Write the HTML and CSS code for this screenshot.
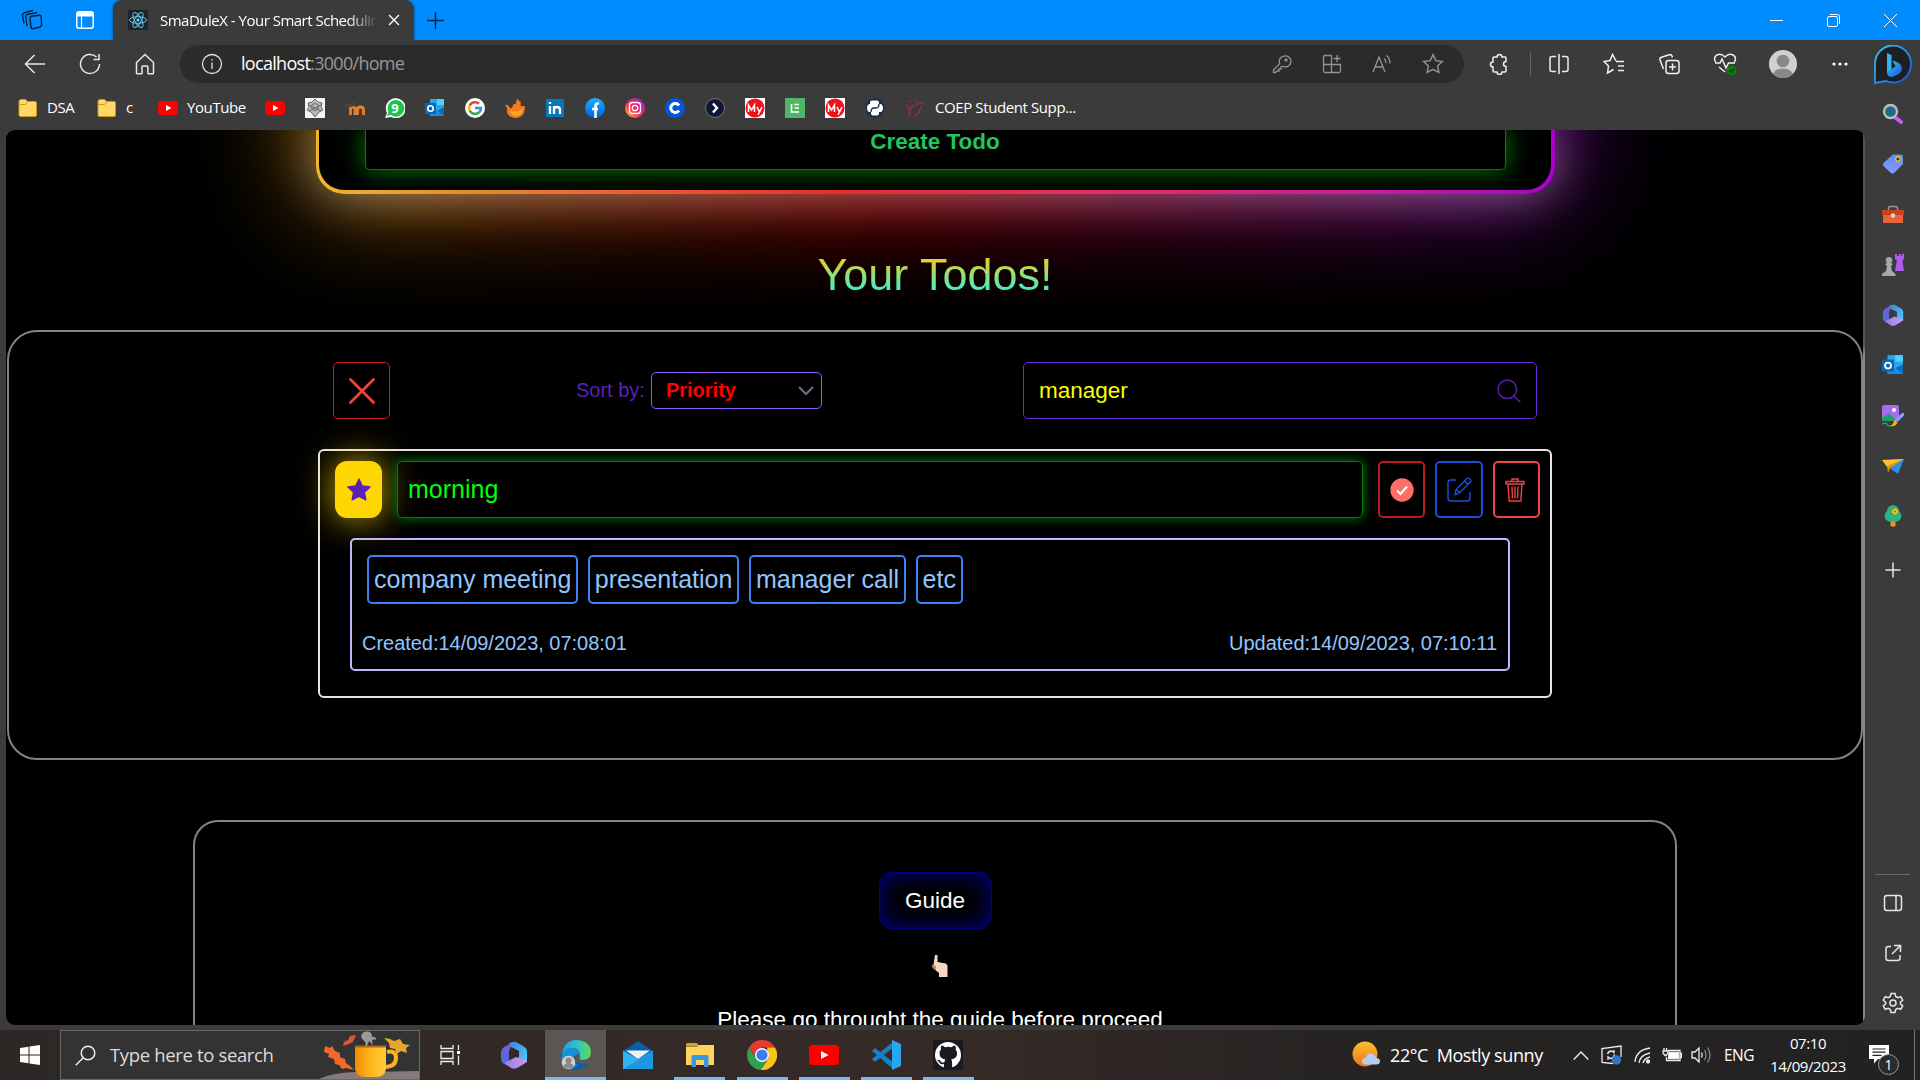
FILE: index.html
```html
<!DOCTYPE html>
<html lang="en">
<head>
<meta charset="utf-8">
<title>SmaDuleX - Your Smart Scheduling</title>
<link rel="stylesheet" href="styles.css">
</head>
<body>
<svg class="defs" width="0" height="0">
  <defs>
    <linearGradient id="gBlue" x1="0" y1="0" x2="1" y2="1"><stop offset="0" stop-color="#35c8f5"/><stop offset="1" stop-color="#1b54d8"/></linearGradient>
    <linearGradient id="gInsta" x1="0" y1="1" x2="1" y2="0"><stop offset="0" stop-color="#ffc928"/><stop offset=".45" stop-color="#f9265c"/><stop offset="1" stop-color="#8a21e8"/></linearGradient>
    <linearGradient id="gFb" x1="0" y1="0" x2="0" y2="1"><stop offset="0" stop-color="#19afff"/><stop offset="1" stop-color="#0062e0"/></linearGradient>
    <linearGradient id="gM1" x1="0" y1="0" x2="0" y2="1"><stop offset="0" stop-color="#7a5cd0"/><stop offset="1" stop-color="#4a6ee0"/></linearGradient>
    <linearGradient id="gM2" x1="0" y1="0" x2="1" y2="1"><stop offset="0" stop-color="#3f7fe0"/><stop offset="1" stop-color="#48d0ff"/></linearGradient>
    <linearGradient id="gM3" x1="0" y1="0" x2="1" y2="0"><stop offset="0" stop-color="#9a7be8"/><stop offset="1" stop-color="#c79af5"/></linearGradient>
    <linearGradient id="gSun" x1="0" y1="0" x2="0" y2="1"><stop offset="0" stop-color="#f6c12e"/><stop offset="1" stop-color="#f4731c"/></linearGradient>
    <linearGradient id="gMug" x1="0" y1="0" x2="1" y2="0"><stop offset="0" stop-color="#f08a00"/><stop offset=".5" stop-color="#ffb81c"/><stop offset="1" stop-color="#ffc93c"/></linearGradient>
    <linearGradient id="gEdge" x1="0" y1="0" x2="1" y2="0"><stop offset="0" stop-color="#1aa0e0"/><stop offset=".5" stop-color="#2cc0d0"/><stop offset="1" stop-color="#5fe04a"/></linearGradient>
    <linearGradient id="gTag" x1="0" y1="0" x2="0" y2="1"><stop offset="0" stop-color="#5a8cf8"/><stop offset="1" stop-color="#8a9aff"/></linearGradient>
    <symbol id="folder" viewBox="0 0 20 20"><path d="M1 3.500Q1 1.500 3 1.500h4.500l2 2H17q1.500 0 1.500 1.500v12q0 1.500-1.500 1.500H2.500Q1 18.500 1 17z" fill="#ffd868" stroke="#c99a1c"/><path d="M1.500 6.500h6l2-2.500" fill="none" stroke="#c99a1c"/></symbol>
    <symbol id="yt" viewBox="0 0 20 20"><rect y="3" width="20" height="14" rx="3.500" fill="#f00"/><path d="M8 7l5.500 3L8 13z" fill="#fff"/></symbol>
    <symbol id="outlook" viewBox="0 0 20 20"><path d="M5 1h14v17H5z" fill="#28a8ea"/><path d="M12 1h7v6h-7z" fill="#50d0ff"/><path d="M5 10l14 8H5z" fill="#1490df"/><path d="M19 9v9l-7-5z" fill="#0f6ab8"/><rect y="5" width="11" height="11" rx="1" fill="#0a66b8"/><circle cx="5.500" cy="10.500" r="2.700" fill="none" stroke="#fff" stroke-width="1.600"/></symbol>
    <symbol id="m365" viewBox="0 0 26 28"><path d="M12 1L3 6Q0 8 0 11v7q0 3 3 5l5 2V10z" fill="url(#gM1)"/><path d="M8 2l6-1.500 9 5q3 2 3 5v11L18 17V10l-8-4z" fill="url(#gM2)"/><path d="M3 22l12-6 11 3q0 2-3 4l-7 4q-3 1.500-6 0z" fill="url(#gM3)"/></symbol>
    <symbol id="my" viewBox="0 0 20 20"><path d="M0 0h20v20H0z" fill="#fff"/><circle cx="10" cy="10" r="9.500" fill="#f0101c"/><path d="M3.500 14V7l3 5 3-5v7M12 9l2.500 5L17 9M14.500 14l-1.500 3" fill="none" stroke="#fff" stroke-width="1.500"/></symbol>
    <symbol id="star" viewBox="0 0 20 20"><path d="M10 1.500l2.600 5.400 5.900.8-4.300 4.100 1.100 5.900L10 14.900l-5.300 2.800 1.100-5.900L1.500 7.700l5.900-.8z"/></symbol>
  </defs>
</svg>

<header class="titlebar">
  <div class="window-tools">
    <svg width="22" height="22" viewBox="0 0 22 22" fill="none" stroke="#04203c" stroke-width="1.400"><path d="M10.500 7.300l7.500-1q2-.2 2.200 1.700l.3 8q0 2-2 2.300l-6.300 1.500q-2 .3-2.200-1.700L9 9.500q0-2 1.500-2.200z"/><path d="M6 17L4.700 7.500q0-2 2-2.300L16 3.800"/><path d="M3 14.500L1.500 6q0-2 2-2.300L12 1.500"/></svg>
    <svg width="18" height="18" viewBox="0 0 18 18"><rect x=".75" y=".75" width="16.500" height="16.500" rx="2.500" fill="none" stroke="#fff" stroke-width="1.500"/><path d="M1 1h16v4.500H1z" fill="#fff"/><path d="M5.500 5v12" stroke="#fff" stroke-width="1.200"/></svg>
  </div>
  <div class="tab">
    <svg width="20" height="20" viewBox="0 0 20 20"><rect width="20" height="20" rx="1" fill="#20232a"/><g fill="none" stroke="#61c9e8" stroke-width="1"><ellipse cx="10" cy="10" rx="8.500" ry="3.300"/><ellipse cx="10" cy="10" rx="8.500" ry="3.300" transform="rotate(60 10 10)"/><ellipse cx="10" cy="10" rx="8.500" ry="3.300" transform="rotate(120 10 10)"/></g><circle cx="10" cy="10" r="1.600" fill="#61dafb"/></svg>
    <span class="tab-title">SmaDuleX - Your Smart Schedulin</span>
    <svg class="tab-close" width="12" height="12" viewBox="0 0 12 12" stroke="#fff" stroke-width="1.400"><path d="M1 1l10 10M11 1L1 11"/></svg>
  </div>
  <svg class="new-tab" width="17" height="17" viewBox="0 0 17 17" stroke="#04203c" stroke-width="1.400"><path d="M8.500 0v17M0 8.500h17"/></svg>
  <div class="window-controls">
    <svg width="13" height="13" viewBox="0 0 13 13" stroke="#fff"><path d="M0 6.500h13"/></svg>
    <svg width="13" height="13" viewBox="0 0 13 13" fill="none" stroke="#fff"><rect x=".5" y="2.500" width="10" height="10" rx="1.500"/><path d="M3 .5h7.500q2 0 2 2V10"/></svg>
    <svg width="13" height="13" viewBox="0 0 13 13" stroke="#fff"><path d="M0 0l13 13M13 0L0 13"/></svg>
  </div>
</header>

<nav class="toolbar">
  <div class="nav-buttons">
    <svg width="22" height="22" viewBox="0 0 22 22"><path d="M21 11H1.500M10.500 2L1.500 11l9 9"/></svg>
    <svg width="22" height="22" viewBox="0 0 22 22"><path d="M20.500 11a9.500 9.500 0 1 1-3-7M20 1v5.500h-5.500"/></svg>
    <svg width="22" height="22" viewBox="0 0 22 22"><path d="M2.500 9.500L11 1.500l8.500 8V20q0 .8-.8.8h-4q-.8 0-.8-.8v-6q0-1-1-1H9q-1 0-1 1v6q0 .8-.8.8h-4q-.7 0-.7-.8z"/></svg>
  </div>
  <div class="address">
    <svg width="22" height="22" viewBox="0 0 22 22" fill="none" stroke="#ddd" stroke-width="1.300"><circle cx="11" cy="11" r="9.500"/><path d="M11 9.500V16M11 6v1.600"/></svg>
    <span class="url"><b>localhost</b>:3000/home</span>
    <div class="address-actions">
      <svg width="20" height="20" viewBox="0 0 20 20"><path d="M12.500 2a5.500 5.500 0 1 1-1.800 10.200L9 13v2H7v2H5l-1.500 1.500H1.500V16l6.200-6.300A5.500 5.500 0 0 1 12.500 2z"/><circle cx="14" cy="6" r="1"/></svg>
      <svg width="20" height="20" viewBox="0 0 20 20"><path d="M9.500 1.500H3Q1.500 1.500 1.500 3v14q0 1.500 1.500 1.500h14q1.500 0 1.500-1.500v-6.500h-17M9.500 1.500v17M15 1v7M11.500 4.500h7"/></svg>
      <svg width="20" height="20" viewBox="0 0 20 20"><path d="M1 18L7 3l6 15M3 13h8M12 4.500q2 1.500 2 4.500M14.500 1.500q3.500 3 3.500 8"/></svg>
      <svg width="22" height="22"><use href="#star"/></svg>
    </div>
  </div>
  <div class="toolbar-actions">
    <svg width="22" height="22" viewBox="0 0 22 22"><path d="M6 4h3a2.500 2.500 0 0 1 5 0h3q1 0 1 1v3.500a2.500 2.500 0 0 0 0 5V18q0 1-1 1h-3a2.500 2.500 0 0 1-5 0H6q-1 0-1-1v-4a2.500 2.500 0 0 1 0-5V5q0-1 1-1z"/></svg>
    <i class="separator"></i>
    <svg class="split" width="22" height="22" viewBox="0 0 22 22"><path d="M8 3.500H4Q2 3.500 2 5.500v11q0 2 2 2h4M14 3.500h4q2 0 2 2v11q0 2-2 2h-4M11 1v20"/></svg>
    <svg class="favorites" width="22" height="22" viewBox="0 0 22 22"><path d="M13 8.500h8M15 13h6M15 17.500h6M13 8L9.500 1.500 7 7.500 1 8.500l4.500 4.500L4.500 20l6-3.500"/></svg>
    <svg class="collections" width="22" height="22" viewBox="0 0 22 22"><rect x="8" y="7.500" width="13" height="13" rx="2.500"/><path d="M14.500 10.500v7M11 14h7M5.500 16L2 7q-.5-2 1.500-2.700L12 1.500q1.500 0 2 1.500l.5 1.500"/></svg>
    <svg class="health" width="24" height="24" viewBox="0 0 24 24"><path d="M2.500 10Q0 5 4 3t8 2q4-4 8-2t1.500 7M2 11h5l2-4 4 9 2.500-5H22M6 15l6 5"/><circle cx="18.500" cy="18.500" r="5" fill="#0f7b0f" stroke="none"/><path d="M16.500 18.500l1.500 1.500 3-3" stroke="#083808"/></svg>
    <svg class="avatar" width="28" height="28" viewBox="0 0 28 28" stroke="none"><circle cx="14" cy="14" r="14" fill="#d2d0ce"/><circle cx="14" cy="11" r="6.300" fill="#8a8886"/><path d="M4 24a10.500 8 0 0 1 20 0 14 14 0 0 1-20 0z" fill="#8a8886"/></svg>
    <svg class="more" width="18" height="4" viewBox="0 0 18 4"><g fill="#fff" stroke="none"><circle cx="3" cy="2" r="1.600"/><circle cx="9" cy="2" r="1.600"/><circle cx="15" cy="2" r="1.600"/></g></svg>
    <svg class="bing" width="38" height="39" viewBox="0 0 38 39"><path d="M1 38V19.500A18 18.500 0 1 1 19 37.500q-4 0-7-1.500z" fill="#1d1f24" stroke="url(#gBlue)" stroke-width="1.800"/><path d="M13 8l4.500 2v14L13 28z" fill="#2fb4f2" stroke="none"/><path d="M13 27l4.500-3 4-2.500-3-6q9 2 9.500 8-.5 4-4 6L18 32q-5 0-5-5z" fill="url(#gBlue)" stroke="none"/></svg>
  </div>
</nav>

<div class="browser-body">
  <div class="browser-main">
    <div class="bookmarks">
      <svg><use href="#folder"/></svg><span class="bm-dsa">DSA</span>
      <svg><use href="#folder"/></svg><span class="bm-c">c</span>
      <svg><use href="#yt"/></svg><span class="bm-yt">YouTube</span>
      <svg><use href="#yt"/></svg>
      <svg viewBox="0 0 20 20"><path d="M0 0h20v20H0z" fill="#f4f4f4"/><path d="M10 1l3 3 4 1-1 4 2 3-4 2-4 5-4-5-4-2 2-3-1-4 4-1z" fill="#bbb"/><g fill="none" stroke="#666" stroke-width="1"><path d="M10 1l3 3 4 1-1 4 2 3-4 2-4 5-4-5-4-2 2-3-1-4 4-1z"/><circle cx="10" cy="9" r="3.500"/><path d="M4 7l12 6M16 7L4 13"/></g></svg>
      <svg viewBox="0 0 20 20"><path d="M5.500 17V9M5.500 11q0-2 2-2t2.500 2v6M12.500 17V9M12.500 12q0-3 3-3t3 3v5" fill="none" stroke="#e8812c" stroke-width="2.800"/><path d="M0 7l8-3 4 2-5 3H1v4" fill="#553f35"/></svg>
      <svg viewBox="0 0 20 20"><path d="M0 20l2-5A10 10 0 1 1 6 19z" fill="#fff"/><path d="M2 18l1.500-4A8.300 8.300 0 1 1 6 17z" fill="#1fc24c"/><text x="10" y="14.500" text-anchor="middle" class="wa-count">9</text></svg>
      <svg><use href="#outlook"/></svg>
      <svg viewBox="0 0 20 20"><circle cx="10" cy="10" r="10" fill="#fff"/><g fill="none" stroke-width="2.600"><path d="M14 5.700A6 6 0 0 0 4.700 7.500" stroke="#ea4335"/><path d="M4.700 7.500a6 6 0 0 0 0 5" stroke="#fbbc05"/><path d="M4.700 12.500A6 6 0 0 0 14 14.500" stroke="#34a853"/><path d="M14 14.500q2-1.700 2-4.500h-6" stroke="#4285f4"/></g></svg>
      <svg viewBox="0 0 20 20"><path d="M0 7q3-1 5 3l2 0Q8 5 11 6q0-4 2-6 0 3 3 4-1 2 0 4l4 0q0 12-10 12Q1 19 2 10z" fill="#f47a1c"/><path d="M5 12q7 4 13-2-1 8-8 8-4-1-5-6z" fill="#ffa52e"/></svg>
      <svg viewBox="0 0 20 20"><path d="M1 1h18v18H1z" fill="#0a76b6"/><path d="M5 8v8M9 8v8M9 12q0-3 3-3t3 3v4M5 4v2" fill="none" stroke="#fff" stroke-width="2.300"/></svg>
      <svg viewBox="0 0 20 20"><circle cx="10" cy="10" r="10" fill="url(#gFb)"/><path d="M10.500 20v-12q0-3 3.500-2.500M7 11h6" fill="none" stroke="#fff" stroke-width="2.600"/></svg>
      <svg viewBox="0 0 20 20"><circle cx="10" cy="10" r="10" fill="url(#gInsta)"/><g fill="none" stroke="#fff" stroke-width="1.300"><rect x="4.500" y="4.500" width="11" height="11" rx="3"/><circle cx="10" cy="10" r="2.700"/></g></svg>
      <svg viewBox="0 0 20 20"><circle cx="10" cy="10" r="10" fill="#0556d8"/><path d="M14 7.500a4.500 4.500 0 1 0 0 5" fill="none" stroke="#fff" stroke-width="3"/></svg>
      <svg viewBox="0 0 20 20"><circle cx="10" cy="10" r="9.500" fill="#0f1738" stroke="#777"/><path d="M8 5.500l4 4.500-4 4.500" fill="none" stroke="#fff" stroke-width="2.400"/></svg>
      <svg><use href="#my"/></svg>
      <svg viewBox="0 0 20 20"><path d="M0 0h20v20H0z" fill="#4fb667"/><path d="M6.500 6v8H14M9.500 6.500H14M9.500 10H14" fill="none" stroke="#fff" stroke-width="1.600"/></svg>
      <svg><use href="#my"/></svg>
      <svg viewBox="0 0 20 20"><circle cx="10" cy="10" r="9.500" fill="#15304d"/><path d="M7 2.500h5q2 0 2 2V6h2q2 1 2 4t-2 4h-2v1.500q0 2-2 2H8q-2 0-2-2V14H4q-2-1-2-4t2-4h1V4.500q0-2 2-2z" fill="#fff"/><path d="M6 14q0-4 3-4h2q3 0 3-4" fill="none" stroke="#15304d" stroke-width="1.300"/></svg>
      <svg viewBox="0 0 20 20" class="coep"><g fill="none" stroke="#8c2a50" stroke-width="1.800"><path d="M2 6q0 5 4 4l3-3M5 18Q3 14 6 10M9 18q6-3 7-9M10 8q4-5 9-2"/></g><circle cx="5" cy="3" r="1.200" fill="#8c2a50"/><circle cx="11" cy="3.500" r="1.200" fill="#8c2a50"/></svg>
      <span class="bm-coep">COEP Student Supp...</span>
    </div>

    <main class="viewport">
      <section class="create-card">
        <div class="create-inner"><button class="create-button">Create Todo</button></div>
      </section>
      <h1 class="heading">Your Todos!</h1>
      <section class="todos">
        <div class="filters">
          <button class="clear"><svg width="26" height="26" viewBox="0 0 26 26" stroke="#f44336" stroke-width="2.800" stroke-linecap="round"><path d="M1.500 1.500l23 23M24.500 1.500l-23 23"/></svg></button>
          <div class="sort"><span>Sort by:</span><div class="select">Priority<svg width="16" height="10" viewBox="0 0 16 10" fill="none" stroke="#6b7280" stroke-width="2" stroke-linecap="round"><path d="M1.500 1.500L8 8l6.500-6.500"/></svg></div></div>
          <div class="search"><span>manager</span><svg width="24" height="24" viewBox="0 0 24 24" fill="none" stroke="#5b1fb0" stroke-width="1.500"><circle cx="10.300" cy="10.300" r="9.300"/><path d="M16.800 16.800l6.500 6.500"/></svg></div>
        </div>
        <article class="todo">
          <div class="todo-head">
            <button class="fav"><svg width="26" height="26" viewBox="0 0 20 20" fill="#5b21b6" stroke="#5b21b6" stroke-linejoin="round"><use href="#star"/></svg></button>
            <div class="todo-title">morning</div>
            <button class="action done"><svg width="24" height="24" viewBox="0 0 24 24"><circle cx="12" cy="12" r="11.700" fill="#ff6f66"/><path d="M7 12.500l3.500 3.500L17 8.500" fill="none" stroke="#fff" stroke-width="2"/></svg></button>
            <button class="action edit"><svg width="25" height="25" viewBox="0 0 25 25" fill="none" stroke="#1d4ed8" stroke-width="1.400"><path d="M9 3H4Q1 3 1 6v15q0 3 3 3h16q3 0 3-3v-6M8 17.500l1-5L20 1.500q1.500-1 3 .5t.5 3L13 15.500zM17.500 4l3.500 3.500M9 12.500l4 3"/></svg></button>
            <button class="action remove"><svg width="20" height="24" viewBox="0 0 20 24" fill="none" stroke="#ef4444" stroke-width="1.400"><path d="M1 3.500h18V6H1zM7 3.500V1h6v2.500M3 6l1.200 17h11.600L17 6M7 8.500l.5 12M10 8.500v12M13 8.500l-.5 12"/></svg></button>
          </div>
          <div class="details">
            <div class="tags"><span>company meeting</span><span>presentation</span><span>manager call</span><span>etc</span></div>
            <div class="dates"><span>Created:14/09/2023, 07:08:01</span><span>Updated:14/09/2023, 07:10:11</span></div>
          </div>
        </article>
      </section>
      <section class="guide">
        <button class="guide-button">Guide</button>
        <svg class="hand" width="16" height="23" viewBox="0 0 16 23"><path d="M3 0h2.500v7L14 8.500l1.500 2V22H7v-4L1 13z" fill="#f7d7c4"/><path d="M0 10h2.500l1.500 2v3.500L0 12z" fill="#b98d68"/></svg>
        <p>Please go throught the guide before proceed</p>
      </section>
    </main>
  </div>

  <aside class="sidebar">
    <svg viewBox="0 0 22 22"><path d="M14 15l5 4" stroke="#c65cf5" stroke-width="4" stroke-linecap="round"/><circle cx="8.500" cy="8.500" r="6.500" fill="#1f6a8c" stroke="#bdbdbd" stroke-width="2.400"/></svg>
    <svg viewBox="0 0 22 22"><path d="M11 1.500h8q2 0 2 2V11l-9 9q-1.500 1-3 0l-7.500-7q-1-1.500 0-3z" fill="url(#gTag)"/><circle cx="16" cy="6" r="2.300" fill="#3a3a3a" stroke="#f0c419" stroke-width="1.400"/></svg>
    <svg viewBox="0 0 22 22"><path d="M6.500 6V4q0-1.500 1.500-1.500h6q1.500 0 1.500 1.500v2" fill="none" stroke="#999" stroke-width="1.500"/><path d="M0 6h22v5H0z" fill="#c8421c"/><path d="M1 11h20v8H1z" fill="#e8623a"/><circle cx="11" cy="11.500" r="2.200" fill="#d8d8d8"/></svg>
    <svg viewBox="0 0 22 22"><path d="M13 0h2v2h2V0h2v2h1V0h2v5l-1.500 1 1 9q1 1 .5 2h-9l2-11-2-1z" fill="#b05cf0"/><path d="M7 3a3.300 3.300 0 0 1 2 6l2 1-2 2 1 5 3.500 3v2H0v-2l4-3 1-5-2-2 2-1a3.300 3.300 0 0 1 2-6z" fill="#a8a8a8"/></svg>
    <svg><use href="#m365"/></svg>
    <svg><use href="#outlook"/></svg>
    <svg viewBox="0 0 22 22"><rect y="0" width="17" height="16" rx="2" fill="#a86cf0"/><circle cx="12" cy="5" r="2" fill="#fff"/><path d="M0 16v-3l7-5 8 8z" fill="#1fa06c"/><path d="M21.500 8q1.500 1 0 3l-6 6-3-2 7-6.500q1-1 2-.5z" fill="#8f9cff"/><path d="M12.500 15l3 2.500Q14 22 8 21q3-1 4.500-6z" fill="#ffb400"/><path d="M0 19q5-2 5 0t4 2" fill="none" stroke="#1fa06c" stroke-width="1.500"/></svg>
    <svg viewBox="0 0 22 22"><path d="M0 5l22-1-6 15-7-5z" fill="#2f8fe8"/><path d="M0 5l22-1L5 12z" fill="#ffc02e"/><path d="M5 11L22 4 8 13l-2 5z" fill="#e6930a"/></svg>
    <svg viewBox="0 0 22 22"><path d="M8.500 15h5v6q-2.500 1.500-5 0z" fill="#e8941c"/><path d="M11 0q6 1 6 6 4 4 1.500 8-1.500 3-7.500 3t-7.500-3Q1 10 5 6q0-5 6-6z" fill="#2bb57c"/><path d="M13 3.500v6M10 6.500h6" stroke="#ffbf1f" stroke-width="3"/><circle cx="13" cy="6.500" r="1" fill="#a54"/></svg>
    <svg class="line add" viewBox="0 0 22 22"><path d="M11 3.500v15M3.500 11h15"/></svg>
    <div class="sidebar-bottom">
      <svg class="line" viewBox="0 0 22 22"><rect x="2.500" y="3.500" width="17" height="15" rx="2.500"/><path d="M14 3.500v15"/></svg>
      <svg class="line" viewBox="0 0 22 22"><path d="M9 4.500H6.500q-2.500 0-2.500 2.500v9q0 2.500 2.500 2.500h9q2.500 0 2.500-2.500v-3M10 12l8.500-8.500M12 3.500h6.500V10"/></svg>
      <svg class="line" viewBox="0 0 22 22"><circle cx="11" cy="11" r="3"/><path d="M9 1.500h4l.7 3 2 1.100 3-.9 2 3.500-2.300 2v1.600l2.300 2-2 3.500-3-.9-2 1.100-.7 3H9l-.7-3-2-1.100-3 .9-2-3.500 2.300-2v-1.600l-2.300-2 2-3.500 3 .9 2-1.100z"/></svg>
    </div>
  </aside>
</div>

<footer class="taskbar">
  <div class="start"><svg width="20" height="20" viewBox="0 0 20 20" fill="#fff"><path d="M0 3l8.500-1.200V9.500H0zM9.500 1.600L20 0v9.500H9.500zM0 10.500h8.500v7.700L0 17zM9.500 10.500H20V20L9.500 18.400z"/></svg></div>
  <div class="task-search">
    <svg width="21" height="21" viewBox="0 0 21 21" fill="none" stroke="#eee" stroke-width="1.500"><circle cx="13" cy="8" r="6.800"/><path d="M8 13L.7 20.300"/></svg>
    <span>Type here to search</span>
    <svg class="autumn" width="100" height="48" viewBox="0 0 100 48"><path d="M0 48Q16 40 46 41l54-1v8z" fill="#85797a"/><path d="M6 15l5 2 2-2 3 5 5 2v4l5 2 1 4 4 3 4 4-8-2-4 1-3-4-4-1-1-5-6-2 1-3-5-2z" fill="#f4692a"/><path d="M37 4l-3 7-4 2-6 2 1-4 4-2 2-4z" fill="#e0553a"/><path d="M65 7l6 1 4 2 6-2 3 5 7 1-4 3 1 5-6-2-4 3-2-5-5-1-1-5z" fill="#e8a52e"/><path d="M68 21q9-2 9 6t-10 9" fill="none" stroke="#ffb21c" stroke-width="4"/><path d="M36 16h31v22q-1 8-10 8H46q-9 0-10-8z" fill="url(#gMug)"/><path d="M36 15.500h31" stroke="#b06a14" stroke-width="2"/><path d="M46 15q2-4-2-6-4-5 1-8 8-2 8 5 4-1 4 3-3-2-4 1l1 4-4-4-2 5z" fill="#9a9a9a"/></svg>
  </div>
  <div class="task-view"><svg width="21" height="20" viewBox="0 0 21 20" fill="none" stroke="#eee" stroke-width="1.300"><path d="M1 0v3.500h12V0M1 20v-3.500h12V20M1 6.500h12v7H1zM18.500 0v5M18.500 10.500V20"/><path d="M17 6h3v3h-3z" fill="#fff" stroke="none"/></svg></div>
  <div class="apps">
    <div class="app"><svg width="26" height="28"><use href="#m365"/></svg></div>
    <div class="app active"><svg width="30" height="30" viewBox="0 0 30 30"><path d="M1 17A14 14 0 0 0 27 23q-10 3-14-4z" fill="#0c5fa8"/><path d="M1 18Q0 8 10 8q8 0 9 7-4-2-6 1-2 6 4 10-14 4-16-8z" fill="#1690d8"/><path d="M1 14Q3 0 16 0q13 1 14 12 0 8-9 8-4-1-2-3 1-9-8-9Q4 8 1 14z" fill="url(#gEdge)"/><circle cx="7.500" cy="22.500" r="6.800" fill="#d2d0ce"/><circle cx="7.500" cy="20.500" r="3" fill="#8a8886"/><path d="M2.500 27a5 4 0 0 1 10 0q-5 3-10 0z" fill="#8a8886"/></svg></div>
    <div class="app"><svg width="30" height="28" viewBox="0 0 30 28"><path d="M0 10L15 0l15 10-15 9z" fill="#0b5cab"/><path d="M3 9.500h24L15 18z" fill="#f2f2f2"/><path d="M0 9.500L15 18 30 9.500V28H0z" fill="#32b4ee"/><path d="M0 28L30 9.500V28z" fill="#1c98e0"/></svg></div>
    <div class="app open"><svg width="28" height="24" viewBox="0 0 28 24"><path d="M0 1.500Q0 0 1.500 0H11l2 3H0z" fill="#e0a008"/><path d="M0 3.500h11l2-1.500h15v20H0z" fill="#ffd35c"/><path d="M5.500 24V14q0-2 2-2h13q2 0 2 2v10H18v-7h-8v7z" fill="#3a98dc"/></svg></div>
    <div class="app open"><svg width="30" height="30" viewBox="0 0 30 30"><path d="M2 7.500A15 15 0 0 1 28 7.500H15L9 18z" fill="#e33b2e"/><path d="M2 7.500A15 15 0 0 0 14 30l7-12-12 .500z" fill="#2da14c"/><path d="M28 7.500A15 15 0 0 1 14 30l7.500-12L20 7.500z" fill="#fcc31e"/><circle cx="15" cy="15" r="7" fill="#fff"/><circle cx="15" cy="15" r="5.600" fill="#3b7ded"/></svg></div>
    <div class="app open"><svg width="30" height="20" viewBox="0 0 30 20"><rect width="30" height="20" rx="3.500" fill="#f00"/><path d="M12 6l7.500 4-7.500 4z" fill="#fff"/></svg></div>
    <div class="app open"><svg width="30" height="30" viewBox="0 0 30 30"><path d="M1 19l3 3L23 7V1L1 19z" fill="#1a7fc4"/><path d="M1 11l3-3 18 14v7z" fill="#1482c8"/><path d="M21 0l9 4v22l-9 4z" fill="#29a8f0"/></svg></div>
    <div class="app open"><svg width="30" height="30" viewBox="0 0 30 30"><path d="M0 0h30v30H0z" fill="#1b1a20"/><circle cx="15" cy="15" r="13" fill="#fff"/><path d="M11 28v-4q-4 1-5-2l-2-2q3-1 4 2 2 1 3.500 0 0-2 1-2.500-6-1-6-6 0-3 1.500-4-.5-2 .3-4 2 0 4 1.700 3-1 6 0 2-1.700 4-1.700.8 2 .3 4 1.500 1.500 1.500 4 0 5-6 6 1 1 1 3v5.500z" fill="#1b1a20"/></svg></div>
  </div>
  <div class="tray">
    <svg class="weather" width="28" height="28" viewBox="0 0 28 28"><circle cx="13" cy="13" r="12.500" fill="url(#gSun)"/><path d="M13 23.500q-3-.5-3-3.500t4-3q1-5 5-4.500t5 4.500q4 0 4 3.300t-4 3.200z" fill="#b4cdf5"/></svg>
    <span class="weather-text">22°C&ensp;Mostly sunny</span>
    <svg class="chev" width="16" height="9" viewBox="0 0 16 9"><path d="M.7 8.500L8 1l7.300 7.500"/></svg>
    <svg class="sync" width="21" height="20" viewBox="0 0 21 20"><path d="M12 18.500l-11-1v-14L20 1v11M6.500 9q1-3 4-3L13 7.500V5M13.500 9.500q-1 4-4 4L7 12v3"/><circle cx="15.500" cy="15" r="4.700" fill="#2f78c8" stroke="none"/></svg>
    <svg class="wifi" width="17" height="17" viewBox="0 0 17 17"><path d="M1 15Q2 3 16 1M5 16q1-8 11-10M9 16q1-4.500 7-6"/><circle cx="14" cy="14.500" r="1.500" fill="#eee"/></svg>
    <svg class="battery" width="20" height="14" viewBox="0 0 20 14"><path d="M6 2.500h12v10H4.500V9M18.500 5.500h1v4h-1M2 0v3M4.500 0v3M1 3h5v2L4 7.500H3L1 5z"/><path d="M7 4.500h9.500v6H6.500z" fill="#fff"/></svg>
    <svg class="sound" width="21" height="18" viewBox="0 0 21 18"><path d="M1 6h3l4-4v14l-4-4H1zM10.500 6.500q1.500 2.500 0 5"/><path d="M13.500 4q3 5 0 10M16.500 1.500q5 7.500 0 15" stroke="#888"/></svg>
    <span class="lang">ENG</span>
    <div class="clock"><span>07:10</span><span>14/09/2023</span></div>
    <div class="notice"><svg width="20" height="19" viewBox="0 0 20 19"><path d="M0 0h20v14H9l-4 4.500V14H0z" fill="#fff"/><path d="M3.500 4h13M3.500 7.200h13M3.500 10.400h9" stroke="#222" stroke-width="1.200"/></svg><span class="badge">1</span></div>
  </div>
</footer>
</body>
</html>
```
FILE: styles.css
```css
* { box-sizing: border-box; }
body { margin: 0; width: 1920px; height: 1080px; overflow: hidden; display: flex; flex-direction: column; background: #3b3b3b; color: #fff; font-family: "Open Sans", "Noto Sans", sans-serif; }
svg { display: block; flex: none; }
button { font: inherit; padding: 0; margin: 0; background: #000; color: inherit; }
.defs { position: absolute; }

.titlebar { height: 40px; background: #008cff; display: flex; align-items: center; flex: none; }
.window-tools { width: 113px; display: flex; align-items: center; gap: 33px; padding-left: 21px; }
.tab { width: 301px; height: 40px; background: #3b3b3b; border-radius: 9px 9px 0 0; display: flex; align-items: center; padding: 0 14px 0 15px; box-shadow: 0 0 3px rgba(0, 0, 0, .5); }
.tab-title { margin-left: 12px; width: 219px; overflow: hidden; white-space: nowrap; font-size: 15px; letter-spacing: -.5px; mask-image: linear-gradient(90deg, #000 86%, transparent); }
.tab-close { margin-left: 10px; }
.new-tab { margin-left: 13px; }
.window-controls { margin-left: auto; display: flex; gap: 44px; padding-right: 23px; }

.toolbar { height: 50px; display: flex; align-items: center; flex: none; background: #3b3b3b; padding-bottom: 2px; }
.nav-buttons { width: 180px; display: flex; gap: 33px; padding-left: 24px; fill: none; stroke: #e8e8e8; stroke-width: 1.5; }
.address { width: 1284px; height: 38px; border-radius: 19px; background: #2b2b2b; display: flex; align-items: center; padding: 0 20px 0 21px; }
.url { margin-left: 18px; padding-bottom: 2px; font-size: 18px; letter-spacing: -.7px; color: #989898; }
.url b { font-weight: 400; color: #fff; }
.address-actions { margin-left: auto; display: flex; align-items: center; gap: 30px; fill: none; stroke: #949494; stroke-width: 1.3; }
.toolbar-actions { flex: 1; display: flex; align-items: center; padding-left: 24px; fill: none; stroke: #f0f0f0; stroke-width: 1.5; }
.separator { width: 1px; height: 24px; background: #666; margin: 0 17px 0 20px; }
.favorites, .collections, .health { margin-left: 33px; }
.avatar { margin-left: 32px; }
.more { margin-left: 34px; }
.bing { margin-left: 25px; }

.browser-body { height: 940px; display: flex; flex: none; }
.browser-main { width: 1865px; display: flex; flex-direction: column; }
.bookmarks { height: 40px; padding: 0 0 4px 18px; display: flex; align-items: center; gap: 20px; font-size: 15px; white-space: nowrap; }
.bookmarks svg { width: 20px; height: 20px; }
.bookmarks span { margin-left: -11px; padding-bottom: 2px; letter-spacing: -.4px; }
.bookmarks .bm-dsa { width: 30px; }
.bookmarks .bm-c { width: 12px; }
.bookmarks .bm-yt { width: 58px; }
.bookmarks .bm-coep { margin-left: -10px; }
.wa-count { font: bold 13px "Open Sans", sans-serif; fill: #fff; }

.viewport { position: relative; isolation: isolate; height: 895px; margin-left: 6px; padding-right: 1px; background: #000; border-radius: 9px; overflow: hidden; display: flex; flex-direction: column; align-items: center; font-family: "Liberation Sans", Arial, sans-serif; }
.viewport::after { content: ""; position: absolute; top: 0; right: 0; width: 2px; height: 895px; background: linear-gradient(#555 214px, #8a8688 224px); }
.create-card { position: relative; flex: none; width: 1239px; height: 64px; padding: 0 4px 4px 3px; border-radius: 0 0 28px 28px; background: linear-gradient(84deg, #efb82c 0, #e88a2c 12%, #e62e2c 42%, #e32e60 62%, #c81ca0 85%, #a800c8); box-shadow: 0 0 48px rgba(255, 255, 255, .4); }
.create-card::before { content: ""; position: absolute; z-index: -1; inset: -300px 0 0; background: linear-gradient(90deg, #c08000 0, #c05000 15%, #e80000 45%, #a80068 75%, #7800a8); filter: blur(56px); }
.create-inner { height: 60px; border-radius: 0 0 25px 25px; background: #000; padding: 0 45px 20px 46px; overflow: hidden; }
.create-button { display: block; width: 100%; height: 40px; border: 1px solid green; border-top: 0; border-radius: 0 0 5px 5px; box-shadow: 0 0 25px green; color: #22c55e; font-size: 22.5px; font-weight: 700; line-height: 24px; padding-bottom: 17px; }
.heading { flex: none; margin: 54px 0 0; height: 82px; font-size: 45px; line-height: 54px; font-weight: 400; background: linear-gradient(#facc15 8px, #22f5e0 48px); -webkit-background-clip: text; background-clip: text; color: transparent; }
.todos { flex: none; width: 1856px; height: 430px; border: 2px solid #848284; border-radius: 30px; padding: 30px 309px 0; }
.filters { height: 57px; margin: 0 15px; display: flex; align-items: center; }
.clear { width: 57px; height: 57px; border: 1.25px solid #c81e1e; border-radius: 5px; display: grid; place-items: center; }
.sort { display: flex; align-items: center; margin-left: 186px; font-size: 20px; color: #5b21b6; gap: 6px; }
.select { width: 171px; height: 37px; border: 1.25px solid #8b5cf6; border-radius: 5px; padding: 0 7px 0 14px; display: flex; align-items: center; justify-content: space-between; color: red; font-weight: 700; }
.search { margin-left: auto; width: 514px; height: 57px; border: 1.25px solid #6d28d9; border-radius: 5px; padding: 0 15px; display: flex; align-items: center; justify-content: space-between; font-size: 22.5px; color: #ff0; }
.todo { margin-top: 30px; height: 249px; border: 2px solid #e5e5e5; border-radius: 6px; padding: 10px 10px 0 15px; }
.todo-head { height: 57px; display: flex; }
.fav { width: 47px; height: 57px; border: 0; border-radius: 12px; background: gold; box-shadow: 0 0 35px rgba(255, 215, 0, .8); display: grid; place-items: center; }
.todo-title { flex: 1; margin: 0 15px; border: 1px solid green; border-radius: 5px; box-shadow: 0 0 12px green; padding-left: 10px; font-size: 25px; line-height: 55px; color: #00ff0d; }
.action { width: 47px; height: 57px; border: 2px solid #b91c1c; border-radius: 5px; display: grid; place-items: center; }
.action + .action { margin-left: 10px; }
.edit { border-color: #1d4ed8; width: 48px; }
.remove { border-color: #ef4444; padding-right: 4px; }
.details { margin: 20px 30px 0 15px; height: 133px; border: 2px solid #c4b5fd; border-radius: 5px; padding: 15px 11px 0 10px; color: #93c5fd; }
.tags { display: flex; gap: 9.5px; padding-left: 5px; font-size: 25px; }
.tags span { height: 49px; line-height: 45px; padding: 0 5px; border: 2px solid #3b82f6; border-radius: 5px; }
.dates { display: flex; justify-content: space-between; margin-top: 27px; font-size: 20px; line-height: 24px; letter-spacing: -.03px; }
.guide { flex: none; margin-top: 60px; width: 1484px; height: 400px; border: 2px solid #848284; border-radius: 25px; display: flex; flex-direction: column; align-items: center; padding-top: 50px; font-size: 22.5px; }
.guide-button { width: 113px; height: 57px; border: 1px solid #00008b; border-radius: 13px; box-shadow: inset 0 0 25px #00008b; }
.hand { margin: 26px 0 0 10px; }
.guide p { margin: 29px 0 0 10px; line-height: 26px; }

.sidebar { width: 55px; padding: 13px 0 0; display: flex; flex-direction: column; align-items: center; gap: 28.300px; }
.sidebar svg { width: 22px; height: 22px; }
.line { fill: none; stroke: #e6e6e6; stroke-width: 1.5; }
.add { margin-top: 3px; }
.sidebar-bottom { margin-top: auto; margin-bottom: 16px; width: 35px; border-top: 1px solid #6a6a6a; padding-top: 17px; display: flex; flex-direction: column; align-items: center; gap: 28px; }

.taskbar { height: 50px; flex: none; display: flex; background: linear-gradient(90deg, #2d2826, #362a27 50%, #262322 70%, #232222); }
.start { width: 60px; display: grid; place-items: center; }
.task-search { width: 360px; height: 50px; border: 1px solid #6a6868; background: #333; display: flex; align-items: center; padding-left: 14px; font-size: 18.500px; letter-spacing: -.35px; color: #dcdcdc; }
.task-search span { margin-left: 14px; padding-bottom: 2px; white-space: nowrap; }
.autumn { margin-left: auto; }
.task-view { width: 61px; display: grid; place-items: center; }
.apps { display: flex; gap: 1.150px; }
.app { width: 61px; height: 50px; display: flex; flex-direction: column; align-items: center; justify-content: center; position: relative; }
.app:first-child { margin-left: 2px; }
.active { background: #5b5553; }
.open::after, .active::after { content: ""; position: absolute; left: 5px; right: 5px; bottom: 0; height: 3px; background: #76b9f5; }
.active::after { left: 0; right: 0; }
.tray { margin-left: auto; display: flex; align-items: center; fill: none; stroke: #eee; stroke-width: 1.3; white-space: nowrap; }
.weather { stroke: none; }
.weather-text { margin-left: 10px; width: 183px; font-size: 18px; letter-spacing: -.4px; }
.sync { margin-left: 12px; }
.wifi { margin-left: 12px; }
.battery { margin-left: 11px; }
.sound { margin-left: 9px; }
.lang { margin-left: 12px; width: 30px; font-size: 15.500px; letter-spacing: -.5px; }
.clock { margin-left: 10px; width: 88px; display: flex; flex-direction: column; align-items: center; font-size: 15px; line-height: 23px; letter-spacing: -.4px; }
.notice { position: relative; margin: 0 14px 0 17px; width: 31px; height: 38px; padding-top: 9px; stroke: none; }
.badge { position: absolute; left: 9px; top: 18px; width: 21px; height: 21px; border: 1px solid #999; border-radius: 50%; background: #2b2b2b; display: grid; place-items: center; font-size: 14px; }
.tray::after { content: ""; width: 1px; height: 50px; background: #777; margin-right: 5px; }
```
